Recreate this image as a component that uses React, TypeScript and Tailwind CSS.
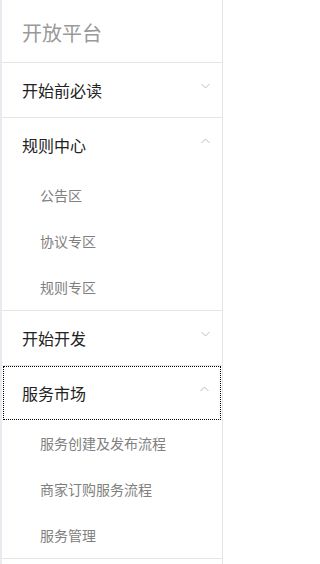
import React from 'react';

type Section = {
  title: string;
  open: boolean;
  focused?: boolean;
  children?: string[];
};

const sections: Section[] = [
  { title: '开始前必读', open: false },
  { title: '规则中心', open: true, children: ['公告区', '协议专区', '规则专区'] },
  { title: '开始开发', open: false },
  {
    title: '服务市场',
    open: true,
    focused: true,
    children: ['服务创建及发布流程', '商家订购服务流程', '服务管理'],
  },
];

function Chevron({ up }: { up: boolean }) {
  return (
    <svg width="9" height="6" viewBox="0 0 9 6" fill="none" className="shrink-0">
      <path
        d={up ? 'M0.5 5L4.5 1L8.5 5' : 'M0.5 1L4.5 5L8.5 1'}
        stroke="#bdbdbd"
        strokeWidth="1"
      />
    </svg>
  );
}

export default function App() {
  return (
    <div
      className="w-[225px] h-[564px] bg-white flex overflow-hidden"
      style={{ fontFamily: '"Noto Sans CJK SC", "Noto Sans", sans-serif' }}
    >
      <div className="w-[2px] bg-[#e9e9ef] shrink-0" />
      <aside className="w-[221px] border-r border-[#e6e6e6] flex flex-col">
        <div className="h-[63px] flex items-center pl-5 pt-[3px] border-b border-[#e6e6e6] text-[20px] text-[#999999]">
          开放平台
        </div>
        {sections.map((s) => (
          <div key={s.title} className="border-b border-[#e6e6e6]">
            <div
              className={
                s.focused
                  ? 'h-[54px] flex items-center justify-between pl-[18px] pr-[11px] mx-px border border-dotted border-black'
                  : 'h-[54px] flex items-center justify-between pl-5 pr-3 text-black'
              }
            >
              <span className="text-[16px] text-[#222222]">{s.title}</span>
              <span className="-mt-2">
                <Chevron up={s.open} />
              </span>
            </div>
            {s.open &&
              s.children?.map((c) => (
                <div key={c} className="h-[46px] flex items-center pl-[38px] text-[14px] text-[#808080]">
                  {c}
                </div>
              ))}
          </div>
        ))}
      </aside>
      <div className="flex-1" />
    </div>
  );
}
